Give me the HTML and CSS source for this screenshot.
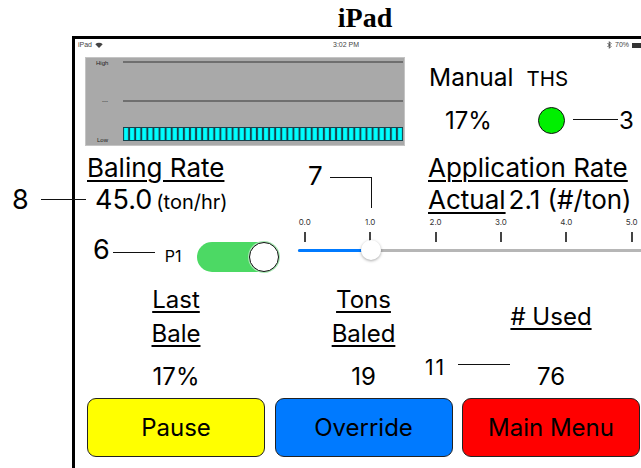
FILE: index.html
```html
<!DOCTYPE html>
<html lang="en">
<head>
    <meta charset="UTF-8">
    <meta name="viewport" content="width=device-width, initial-scale=1.0">
    <title>iPad - Baler Monitor</title>
    <link rel="stylesheet" href="styles.css">
</head>
<body>
<div class="page">
    <h1 class="title">iPad</h1>

    <div class="device">
        <div class="status-bar">
            <span class="sb-left">iPad
                <svg class="wifi" width="8" height="6" viewBox="0 0 8 6"><path d="M4 6 L0.3 2.2 A5.4 5.4 0 0 1 7.7 2.2 Z" fill="#444"/></svg>
            </span>
            <span class="sb-time">3:02 PM</span>
            <span class="sb-right">
                <svg width="5" height="8" viewBox="0 0 5 8"><path d="M0.5 2 L4 5.5 L2.3 7.3 V0.7 L4 2.5 L0.5 6" fill="none" stroke="#444" stroke-width="0.9"/></svg>
                70%
                <span class="battery"></span>
            </span>
        </div>

        <div class="screen">
            <div class="top-row">
                <svg class="chart" width="320" height="89" viewBox="0 0 320 89">
                    <defs>
                        <pattern id="bars" x="38" y="0" width="6.087" height="89" patternUnits="userSpaceOnUse">
                            <rect x="0.5" y="70.5" width="5.087" height="13" fill="#00ffff" stroke="#17424c"/>
                        </pattern>
                    </defs>
                    <rect x="0.5" y="0.5" width="319" height="88" fill="#a9a9a9" stroke="#c4c4c4"/>
                    <text class="chart-label" x="11" y="8">High</text>
                    <line x1="38" y1="5" x2="318" y2="5" stroke="#5c5c5c" stroke-width="1.5"/>
                    <text class="chart-label" x="17" y="46">---</text>
                    <line x1="38" y1="44" x2="318" y2="44" stroke="#5c5c5c" stroke-width="1.5"/>
                    <text class="chart-label" x="12" y="85">Low</text>
                    <rect x="38" y="70" width="280" height="14" fill="url(#bars)"/>
                </svg>

                <div class="mode">
                    <div class="mode-head">
                        <span class="manual">Manual</span>
                        <span class="ths">THS</span>
                    </div>
                    <div class="mode-vals">
                        <span class="mode-pct">17%</span>
                        <span class="lamp"></span>
                        <span class="lead lead-3"></span>
                        <span class="callout-num">3</span>
                    </div>
                </div>
            </div>

            <div class="rates">
                <div class="rate-col baling">
                    <div class="rate-title"><u>Baling Rate</u></div>
                    <div class="rate-line indent">
                        <span class="big-num">45.0</span>
                        <span class="unit">(ton/hr)</span>
                    </div>
                </div>
                <div class="rate-col">
                    <div class="rate-title"><u>Application Rate</u></div>
                    <div class="rate-line">
                        <u>Actual</u>
                        <span>2.1 (#/ton)</span>
                    </div>
                </div>
            </div>

            <div class="controls">
                <div class="switch-group">
                    <span class="callout-6">
                        <span class="callout-num">6</span>
                        <span class="lead lead-6"></span>
                    </span>
                    <span class="p1">P1</span>
                    <span class="toggle"><span class="toggle-knob"></span></span>
                </div>

                <div class="slider">
                    <div class="scale">
                        <div class="tick"><span>0.0</span><i></i></div>
                        <div class="tick"><span>1.0</span><i></i></div>
                        <div class="tick"><span>2.0</span><i></i></div>
                        <div class="tick"><span>3.0</span><i></i></div>
                        <div class="tick"><span>4.0</span><i></i></div>
                        <div class="tick"><span>5.0</span><i></i></div>
                    </div>
                    <div class="track">
                        <div class="track-fill" style="width: 73px"></div>
                        <div class="slider-knob" style="left: 63px"></div>
                    </div>
                </div>
            </div>

            <div class="stats">
                <div class="stat-head"><u>Last</u><br><u>Bale</u></div>
                <div class="stat-head"><u>Tons</u><br><u>Baled</u></div>
                <div class="stat-head single"><u># Used</u></div>
                <div class="stat-val">17%</div>
                <div class="stat-val">19</div>
                <div class="stat-val">76</div>
            </div>

            <div class="buttons">
                <button class="btn btn-pause">Pause</button>
                <button class="btn btn-override">Override</button>
                <button class="btn btn-menu">Main Menu</button>
            </div>
        </div>
    </div>

    <!-- callouts that sit over the layout -->
    <div class="callout callout-8"><span class="callout-num">8</span><span class="lead lead-8"></span></div>
    <div class="callout callout-7"><span class="callout-num">7</span><span class="lead-7"></span></div>
    <div class="callout callout-11"><span class="num-11">11</span><span class="lead lead-11"></span></div>
</div>
</body>
</html>
```

FILE: styles.css
```css
body { margin: 0; background: #fff; font-family: "Inter", "Liberation Sans", sans-serif; color: #000; overflow: hidden; }
.page { position: relative; width: 641px; height: 468px; overflow: hidden; }
.title { margin: 0 0 0 72px; width: 586px; height: 34px; padding-top: 2px; text-align: center; font: bold 28px/32px "Liberation Serif", serif; }

.device { margin-left: 72px; width: 586px; height: 440px; box-sizing: border-box; border-top: 3px solid #000; border-left: 3px solid #000; }

/* status bar */
.status-bar { display: grid; grid-template-columns: 258px auto 1fr; align-items: center; width: 566px; height: 12px; font: 7px/12px "Liberation Sans", sans-serif; color: #444; }
.sb-left { padding-left: 3px; display: flex; align-items: center; gap: 3px; }
.sb-right { display: flex; justify-content: flex-end; align-items: center; gap: 3px; }
.battery { display: inline-block; width: 9px; height: 5px; background: #333; }

.screen { padding: 6px 0 0 10px; }

/* chart + mode */
.top-row { display: flex; height: 89px; }
.chart { display: block; }
.chart-label { font: 6px "Liberation Sans", sans-serif; fill: #222; }
.mode { margin-left: 24px; padding-top: 6px; }
.mode-head { display: flex; align-items: baseline; gap: 13px; height: 28px; line-height: 28px; }
.manual { font-size: 24.5px; }
.ths { font-size: 20.5px; }
.mode-vals { display: flex; align-items: center; margin-top: 14px; height: 30px; font-size: 24px; }
.mode-pct { width: 109px; padding-left: 16px; box-sizing: border-box; }
.lamp { width: 27px; height: 27px; box-sizing: border-box; border: 1.5px solid #111; border-radius: 50%; background: #00f000; }
.lead { display: inline-block; height: 1px; background: #111; }
.lead-3 { width: 45px; margin: 0 1px 2px 8px; }
.callout-num { font-size: 24px; }

/* rates */
.rates { display: flex; margin: 7px 0 0 2px; }
.rate-col { font-size: 26px; }
.baling { width: 341px; }
.rate-title { height: 30px; line-height: 30px; }
.rate-line { display: flex; align-items: baseline; gap: 3px; height: 33px; line-height: 33px; }
.indent { padding-left: 8px; gap: 4px; }
.big-num { font-size: 27px; }
.unit { font-size: 20px; }
u { text-underline-offset: 3px; text-decoration-thickness: 1.5px; }

/* switch + slider */
.controls { display: flex; height: 58px; }
.switch-group { display: flex; align-items: center; height: 32px; margin-top: 25px; }
.callout-6 { display: flex; align-items: center; margin: 0 0 16px 8px; }
.callout-6 .callout-num { font-size: 27px; }
.lead-6 { width: 42px; margin-left: 3px; margin-top: 6px; }
.p1 { width: 42px; padding-left: 10px; box-sizing: border-box; margin-bottom: 2px; font-size: 16px; }
.toggle { position: relative; width: 82px; height: 30px; border-radius: 15px; background: #4cd964; }
.toggle-knob { position: absolute; right: 0; top: 0; width: 30px; height: 30px; box-sizing: border-box; border: 1.2px solid #111; border-radius: 50%; background: #fff; box-shadow: 0 0 0 1px #a8eab4; }

.slider { width: 350px; margin: 2px 0 0 19px; }
.scale { display: flex; gap: 51.4px; }
.tick { width: 14px; display: flex; flex-direction: column; align-items: center; }
.tick span { font-size: 8px; line-height: 9px; color: #333; }
.tick i { display: block; width: 2px; height: 10px; margin-top: 5px; background: #444; }
.track { position: relative; height: 3px; margin-top: 7px; background: #b6b6b6; border-radius: 2px; }
.track-fill { height: 3px; background: #007aff; border-radius: 2px; }
.slider-knob { position: absolute; top: -9px; width: 20px; height: 20px; border-radius: 50%; background: #fff; box-shadow: 0 1px 3px rgba(0,0,0,0.35); }

/* stats */
.stats { display: grid; grid-template-columns: 178px 178px 178px; column-gap: 9.5px; margin: 9px 0 0 2px; font-size: 24px; text-align: center; }
.stat-head { line-height: 34px; }
.stat-head.single { align-self: center; }
.stat-val { margin-top: 9px; line-height: 34px; }

/* buttons */
.buttons { display: grid; grid-template-columns: 178px 178px 178px; column-gap: 9.5px; margin: 4px 0 0 2px; }
.btn { height: 59px; border: 1.5px solid #222; border-radius: 9px; font: 24px "Inter", "Liberation Sans", sans-serif; color: #000; cursor: pointer; }
.btn-pause { background: #ffff00; }
.btn-override { background: #007aff; }
.btn-menu { background: #ff0000; }

/* callouts */
.callout { position: absolute; display: flex; align-items: center; }
.callout-8 { left: 12px; top: 183px; }
.callout-8 .callout-num { font-size: 27px; }
.lead-8 { width: 45px; margin-left: 12px; }
.callout-7 { left: 308px; top: 162px; align-items: flex-start; }
.callout-7 .callout-num { font-size: 26px; line-height: 28px; }
.lead-7 { width: 41px; height: 30px; margin: 15px 0 0 7px; border-top: 1.3px solid #111; border-right: 1.3px solid #111; }
.callout-11 { left: 425px; top: 355px; font-size: 21px; }
.num-11 { width: 28px; letter-spacing: 2px; }
.lead-11 { width: 52px; margin: 0 0 6px 5px; }
```
